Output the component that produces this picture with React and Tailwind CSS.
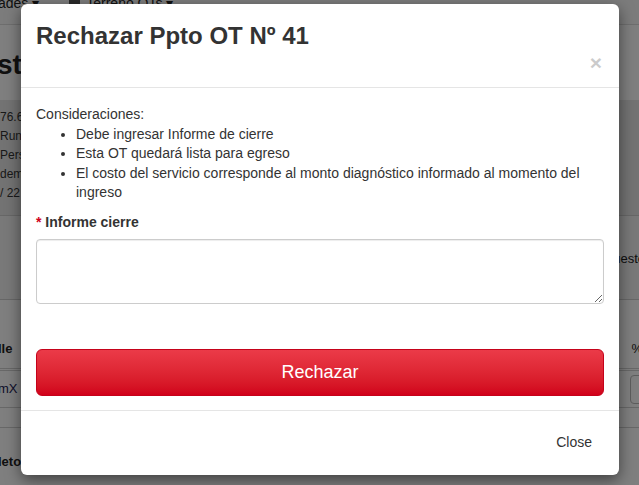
import React from 'react'

// ─── Background page (dimmed behind the modal) ───────────────────────────────

function BackgroundPage() {
  return (
    <div className="flex flex-col w-full h-full bg-white text-[#222]">
      {/* navbar */}
      <div className="flex-none h-[25px] bg-[#f8f8f8] border-b border-[#dcdcdc] flex items-start gap-[14px] text-[14px] overflow-hidden">
        <span className="-mt-[7px] ml-[-2px]">ades ▾</span>
        <span className="-mt-[7px] flex items-center gap-[6px] ml-[16px]">
          <span className="inline-block w-[11px] h-[11px] bg-[#555] rounded-[2px]" />
          Terreno OTs ▾
        </span>
      </div>

      {/* heading */}
      <div className="flex-none h-[75px] flex items-center">
        <h2 className="text-[28px] font-bold leading-none mt-[4px] ml-[-3px]">sto</h2>
      </div>

      {/* info panel */}
      <div className="flex-none h-[115px] bg-[#e6e6e6] pt-[8px] text-[12px] leading-[19px] text-[#333]">
        <p>76.615.432-1</p>
        <p>Run</p>
        <p>Persona</p>
        <p>demanda</p>
        <p>/ 22</p>
      </div>

      {/* tabs region */}
      <div className="flex-none h-[85px] bg-[#f2f2f2] border-t border-b border-[#cfcfcf] flex items-center justify-end text-[13px]">
        <span className="-mr-[6px] mt-[2px]">uesto</span>
      </div>

      {/* table */}
      <div className="flex-none h-[68px] flex items-end justify-between text-[13px] font-bold pb-[10px]">
        <span className="ml-[-2px]">lle</span>
        <span className="-mr-[4px] font-normal">%</span>
      </div>
      <div className="flex-none h-[3px] border-t border-b border-[#d0d0d0]" />
      <div className="flex-none h-[37px] border-b border-[#d0d0d0] flex items-center justify-between text-[13px]">
        <span className="text-[#225] ml-[-2px]">mX</span>
        <span className="w-[20px] h-[29px] border border-[#bbb] rounded-[4px] -mr-[11px]" />
      </div>
      <div className="flex-none h-[20px] border-b border-[#d0d0d0]" />
      <div className="flex-none flex items-end pt-[24px] text-[13px] font-bold">
        <span className="w-[153px] ml-[-2px]">leto</span>
        <span className="w-[387px]">Total</span>
        <span>Abono</span>
      </div>
    </div>
  )
}

// ─── Screen ──────────────────────────────────────────────────────────────────

export default function App() {
  return (
    <div
      className="relative w-[639px] h-[485px] overflow-hidden"
      style={{ fontFamily: '"Liberation Sans", Arial, sans-serif' }}
    >
      <BackgroundPage />

      {/* backdrop */}
      <div className="absolute inset-0 bg-black/50" />

      {/* modal */}
      <div className="absolute left-[21px] top-[4px] w-[598px] h-[471px] bg-white rounded-[6px] shadow-[0_5px_15px_rgba(0,0,0,0.5)] flex flex-col text-[#333]">

        {/* ── Header ───────────────────────────────────────────────── */}
        <div className="flex-none h-[84px] border-b border-[#e5e5e5] px-[15px] pt-[19px] flex flex-col">
          <h4 className="text-[24px] font-bold leading-[1.1] text-[#333]">Rechazar Ppto OT Nº 41</h4>
          <button className="self-end mt-[3px] mr-[2px] text-[21px] font-bold leading-none text-black opacity-20">
            ×
          </button>
        </div>

        {/* ── Body ─────────────────────────────────────────────────── */}
        <div className="flex-none px-[15px] pt-[17px] pb-[14px] text-[14px] leading-[19.6px]">
          <p>Consideraciones:</p>
          <ul className="list-disc pl-[40px] mb-[10px]">
            <li>Debe ingresar Informe de cierre</li>
            <li>Esta OT quedará lista para egreso</li>
            <li>El costo del servicio corresponde al monto diagnóstico informado al momento del ingreso</li>
          </ul>
          <label className="block font-bold mb-[6px]">
            <span className="text-[#d0021b]">*</span> Informe cierre
          </label>
          <textarea
            className="block w-full h-[65px] border border-[#cccccc] rounded-[4px] shadow-[inset_0_1px_1px_rgba(0,0,0,0.075)] px-[12px] py-[6px] outline-none"
          />
          <button className="mt-[45px] w-full h-[47px] rounded-[6px] border border-[#c5021a] bg-linear-to-b from-[#eb3a48] to-[#d1001a] text-white text-[18px] leading-none">
            Rechazar
          </button>
        </div>

        {/* ── Footer ───────────────────────────────────────────────── */}
        <div className="flex-1 border-t border-[#e5e5e5] px-[15px] flex items-center justify-end">
          <button className="px-[12px] h-[34px] text-[14px] text-[#333] mt-[-1px]">Close</button>
        </div>
      </div>
    </div>
  )
}
